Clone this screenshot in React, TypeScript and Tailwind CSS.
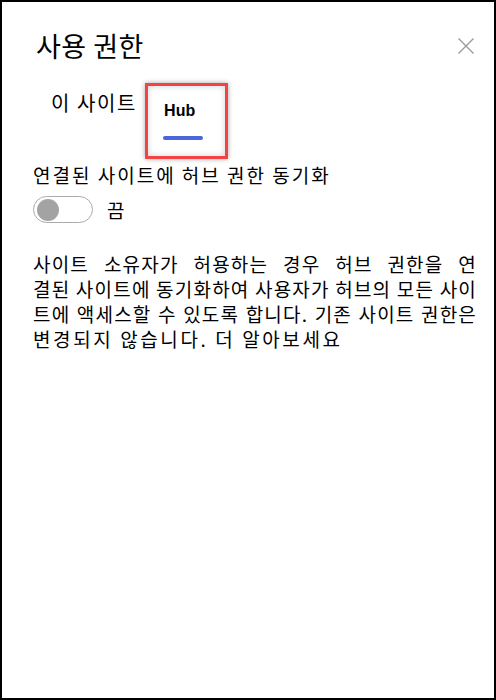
import React, { useState } from "react";

const ko = { fontFamily: '"Noto Sans CJK KR", "Noto Sans", sans-serif' };

const CloseIcon = () => (
  <svg width="16" height="16" viewBox="0 0 16 16" className="block">
    <path d="M0.5 0.5 L15.5 15.5 M15.5 0.5 L0.5 15.5" stroke="#9a9a9a" strokeWidth="1.4" fill="none" />
  </svg>
);

const PermissionsPanel: React.FC = () => {
  const [tab, setTab] = useState<"site" | "hub">("hub");
  const [sync, setSync] = useState(false);

  return (
    <div className="w-[496px] h-[700px] border-2 border-black bg-white text-black flex flex-col" style={ko}>
      {/* header */}
      <div className="flex items-center justify-between pl-[34px] pr-[20px] pt-[26px]">
        <h1 className="text-[27px] leading-[36px] font-normal tracking-[0.5px]">사용 권한</h1>
        <button className="p-0">
          <CloseIcon />
        </button>
      </div>

      {/* tabs */}
      <div className="flex items-start pl-[49px] mt-[19px]">
        <button
          onClick={() => setTab("site")}
          className="text-[20px] leading-[24px] pt-[8px] mr-[8px] tracking-[1.6px]"
        >
          이 사이트
        </button>
        <div className="border-[3px] border-[#f24444] shadow-[0_0_5px_rgba(0,0,0,0.35),inset_0_0_6px_rgba(0,0,0,0.18)] w-[83px] h-[76px] flex flex-col items-start">
          <button
            onClick={() => setTab("hub")}
            className="ml-[16px] mt-[15px] text-[16px] leading-[20px] font-bold"
            style={{ fontFamily: '"Liberation Sans", Arial, sans-serif' }}
          >
            Hub
          </button>
          {tab === "hub" && <div className="ml-[15px] mt-[15px] w-[40px] h-[4px] rounded-full bg-[#4a66d8]" />}
        </div>
      </div>

      {/* sync setting */}
      <div className="pl-[31px] pr-[16px] mt-[3px]">
        <div className="text-[19px] leading-[26px] tracking-[2px]">연결된 사이트에 허브 권한 동기화</div>
        <div className="flex items-center mt-[8px]">
          <button
            onClick={() => setSync(!sync)}
            className="w-[60px] h-[27px] rounded-full border border-[#ababab] flex items-center px-[3px]"
          >
            <span className={`w-[22px] h-[22px] rounded-full bg-[#a3a3a3] ${sync ? "ml-auto" : ""}`} />
          </button>
          <span className="ml-[14px] text-[19px] leading-[26px]">{sync ? "켬" : "끔"}</span>
        </div>

        <div className="mt-[28px] w-[444px] text-[19px] leading-[25px]">
          <div className="whitespace-nowrap text-justify [text-align-last:justify] tracking-[1.2px]">사이트 소유자가 허용하는 경우 허브 권한을 연</div>
          <div className="whitespace-nowrap text-justify [text-align-last:justify] tracking-[1.2px]">결된 사이트에 동기화하여 사용자가 허브의 모든 사이</div>
          <div className="whitespace-nowrap text-justify [text-align-last:justify] tracking-[1.2px]">트에 액세스할 수 있도록 합니다. 기존 사이트 권한은</div>
          <div className="whitespace-nowrap tracking-[2.6px]">변경되지 않습니다. 더 알아보세요</div>
        </div>
      </div>
    </div>
  );
};

export default function App() {
  return <PermissionsPanel />;
}
